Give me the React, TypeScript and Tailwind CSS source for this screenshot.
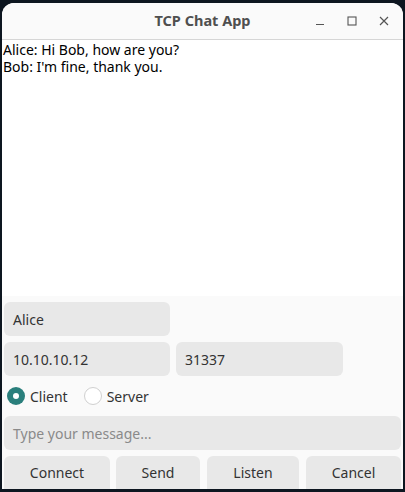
import { useState } from 'react';

const font = { fontFamily: '"Noto Sans", "Open Sans", sans-serif' };

function Radio({ checked, label, onClick }: { checked: boolean; label: string; onClick: () => void }) {
  return (
    <button className="flex items-center gap-[5px]" onClick={onClick}>
      {checked ? (
        <span className="w-[18px] h-[18px] rounded-full bg-[#2a7f7c] flex items-center justify-center">
          <span className="w-[6px] h-[6px] rounded-full bg-white" />
        </span>
      ) : (
        <span className="w-[18px] h-[18px] rounded-full border border-[#d0d0d0] bg-white" />
      )}
      <span className="text-[14px] text-[#333]">{label}</span>
    </button>
  );
}

export default function App() {
  const [mode, setMode] = useState<'client' | 'server'>('client');

  return (
    <div className="w-[405px] h-[492px] bg-[#0d1620] pt-[3px] px-[2px] pb-[3px] flex" style={font}>
      <div className="flex-1 flex flex-col rounded-t-[12px] overflow-hidden bg-[#fafafa]">
        {/* title bar */}
        <div className="h-[37px] shrink-0 bg-[#fafafa] border-b border-[#d6d6d6] relative flex items-center justify-center">
          <span className="text-[14.5px] font-bold text-[#4f4f4f]">TCP Chat App</span>
          <div className="absolute right-[12px] top-0 h-full flex items-center gap-[18px] text-[#555]">
            <svg width="14" height="14" viewBox="0 0 14 14">
              <path d="M3 10.5h8" stroke="currentColor" strokeWidth="1.2" />
            </svg>
            <svg width="14" height="14" viewBox="0 0 14 14">
              <rect x="3" y="3" width="8" height="8" fill="none" stroke="currentColor" strokeWidth="1.1" />
            </svg>
            <svg width="14" height="14" viewBox="0 0 14 14">
              <path d="M3 3l8 8M11 3l-8 8" stroke="currentColor" strokeWidth="1.2" />
            </svg>
          </div>
        </div>

        {/* chat log */}
        <div className="h-[256px] shrink-0 bg-white px-[1px] pt-[1px] text-[14px] leading-[17px] text-black">
          <p>Alice: Hi Bob, how are you?</p>
          <p>Bob: I'm fine, thank you.</p>
        </div>

        {/* controls */}
        <div className="flex-1 flex flex-col px-[2px] pt-[6px]">
          <div className="w-[166px] h-[34px] rounded-[6px] bg-[#e8e8e8] flex items-center px-[9px] text-[14px] text-[#333]">
            Alice
          </div>
          <div className="flex gap-[6px] mt-[6px]">
            <div className="w-[166px] h-[34px] rounded-[6px] bg-[#e8e8e8] flex items-center px-[9px] text-[14px] text-[#333]">
              10.10.10.12
            </div>
            <div className="w-[167px] h-[34px] rounded-[6px] bg-[#e8e8e8] flex items-center px-[9px] text-[14px] text-[#333]">
              31337
            </div>
          </div>
          <div className="flex items-center gap-[16px] h-[28px] mt-[6px] pl-[3px]">
            <Radio checked={mode === 'client'} label="Client" onClick={() => setMode('client')} />
            <Radio checked={mode === 'server'} label="Server" onClick={() => setMode('server')} />
          </div>
          <div className="h-[34px] mt-[6px] rounded-[6px] bg-[#e8e8e8] flex items-center px-[9px] text-[14px] text-[#8a8a8a]">
            Type your message...
          </div>
          <div className="flex mt-[6px] flex-1">
            <button className="w-[106px] rounded-t-[6px] bg-[#e8e8e8] text-[14px] text-[#333]">Connect</button>
            <button className="w-[84px] ml-[6px] rounded-t-[6px] bg-[#e8e8e8] text-[14px] text-[#333]">Send</button>
            <button className="w-[92px] ml-[7px] rounded-t-[6px] bg-[#e8e8e8] text-[14px] text-[#333]">Listen</button>
            <button className="flex-1 ml-[7px] rounded-t-[6px] bg-[#e8e8e8] text-[14px] text-[#333]">Cancel</button>
          </div>
        </div>
      </div>
    </div>
  );
}
